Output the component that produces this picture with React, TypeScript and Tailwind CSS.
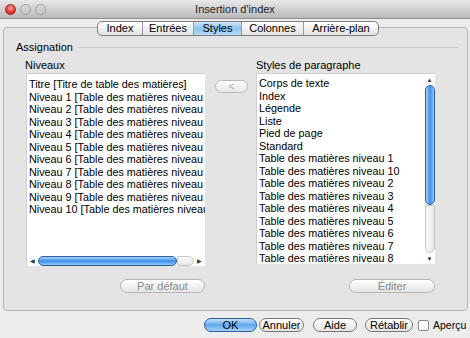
import React from 'react';

const niveaux = [
  'Titre [Titre de table des matières]',
  'Niveau 1 [Table des matières niveau 1]',
  'Niveau 2 [Table des matières niveau 2]',
  'Niveau 3 [Table des matières niveau 3]',
  'Niveau 4 [Table des matières niveau 4]',
  'Niveau 5 [Table des matières niveau 5]',
  'Niveau 6 [Table des matières niveau 6]',
  'Niveau 7 [Table des matières niveau 7]',
  'Niveau 8 [Table des matières niveau 8]',
  'Niveau 9 [Table des matières niveau 9]',
  'Niveau 10 [Table des matières niveau 10]',
];

const styles = [
  'Corps de texte',
  'Index',
  'Légende',
  'Liste',
  'Pied de page',
  'Standard',
  'Table des matières niveau 1',
  'Table des matières niveau 10',
  'Table des matières niveau 2',
  'Table des matières niveau 3',
  'Table des matières niveau 4',
  'Table des matières niveau 5',
  'Table des matières niveau 6',
  'Table des matières niveau 7',
  'Table des matières niveau 8',
  'Table des matières niveau 9',
];

const tabs = ['Index', 'Entrées', 'Styles', 'Colonnes', 'Arrière-plan'];

const Pill = ({ label, className, disabled }: { label: string; className: string; disabled?: boolean }) => (
  <div
    className={
      'flex items-center justify-center rounded-full border bg-gradient-to-b from-[#ffffff] to-[#e4e4e4] ' +
      (disabled ? 'border-[#b4b4b4] text-[#8a8a8a] ' : 'border-[#777] text-black ') +
      className
    }
  >
    {label}
  </div>
);

export default function App() {
  return (
    <div className="w-[470px] h-[338px] overflow-hidden bg-[#ececec] text-[10px] text-black font-['Liberation_Sans',Arial,sans-serif]">
      {/* title bar */}
      <div className="h-[19px] flex items-center border-b border-[#8f8f8f] bg-gradient-to-b from-[#e9e9e9] to-[#b9b9b9]">
        <div className="w-[60px] flex items-center gap-[4px] pl-[5px]">
          <span className="w-[11px] h-[11px] rounded-full border border-[#a22] bg-[radial-gradient(circle_at_50%_35%,#ffb0a8,#e0322a_60%,#b51a14)]" />
          <span className="w-[11px] h-[11px] rounded-full border border-[#a0a0a0] bg-gradient-to-b from-[#d8d8d8] to-[#c4c4c4]" />
          <span className="w-[11px] h-[11px] rounded-full border border-[#a0a0a0] bg-gradient-to-b from-[#d8d8d8] to-[#c4c4c4]" />
        </div>
        <div className="flex-1 text-center text-[11px] text-[#222] leading-none">Insertion d'index</div>
        <div className="w-[60px]" />
      </div>

      {/* tabs */}
      <div className="relative z-10 mt-[2px] pl-[97px] flex">
        <div className="flex h-[15px] rounded-[5px] border border-[#7d7d7d] overflow-hidden bg-gradient-to-b from-[#ffffff] to-[#e3e3e3] text-[11px]">
          {tabs.map((t, i) => (
            <div
              key={t}
              className={
                'flex items-center justify-center leading-none ' +
                (i > 0 ? 'border-l border-[#9a9a9a] ' : '') +
                (t === 'Styles' ? 'bg-gradient-to-b from-[#cfe6fa] via-[#8fc3ee] to-[#b6dafa] ' : '') +
                (t === 'Index' ? 'w-[44px]' : t === 'Entrées' ? 'w-[51px]' : t === 'Styles' ? 'w-[48px]' : t === 'Colonnes' ? 'w-[62px]' : 'w-[75px]')
              }
            >
              {t}
            </div>
          ))}
        </div>
      </div>

      {/* group box */}
      <div className="-mt-[9px] ml-[3px] w-[465px] h-[284px] rounded-[4px] border border-[#b5b5b5] bg-[#e4e4e4] flex flex-col">
        <div className="mt-[13px] pl-[12px] flex items-center gap-[5px]">
          <span className="text-[11px] leading-[12px]">Assignation</span>
          <span className="w-[380px] h-px bg-[#c8c8c8]" />
        </div>

        <div className="mt-[6px] flex pl-[21px] text-[11px] leading-[12px]">
          <span className="w-[231px]">Niveaux</span>
          <span>Styles de paragraphe</span>
        </div>

        <div className="mt-[2px] flex pl-[22px] text-[10.8px]">
          {/* left list */}
          <div className="flex flex-col items-end">
            <div className="w-[179px] h-[193px] bg-white border-l border-t border-[#cfcfcf] flex flex-col">
              <div className="flex-1 overflow-hidden pl-[2px] pt-[4px] leading-[12.5px] whitespace-nowrap">
                {niveaux.map((n) => (
                  <div key={n}>{n}</div>
                ))}
              </div>
              {/* horizontal scrollbar */}
              <div className="h-[11px] flex items-center bg-white">
                <div className="w-[11px] flex justify-center text-[6px] text-[#333] leading-none">◀</div>
                <div className="w-[140px] h-[10px] rounded-full border border-[#2c5f9e] bg-gradient-to-b from-[#a9d4ff] via-[#3d8ee6] to-[#8fc8ff]" />
                <div className="w-[17px] h-[10px] rounded-r-full border border-[#c8c8c8] bg-gradient-to-b from-[#fafafa] to-[#e8e8e8]" />
                <div className="w-[11px] flex justify-center text-[6px] text-[#333] leading-none">▶</div>
              </div>
            </div>
            <Pill label="Par défaut" disabled className="mt-[13px] w-[85px] h-[14px] text-[11px]" />
          </div>

          {/* arrow button */}
          <div className="ml-[10px] mt-[7px] w-[33px] h-[13px] rounded-full border border-[#b8b8b8] bg-gradient-to-b from-[#fdfdfd] to-[#e6e6e6] flex items-center justify-center text-[#b0b0b0] text-[11px] leading-none">
            &lt;
          </div>

          {/* right list */}
          <div className="ml-[8px] flex flex-col items-end">
            <div className="w-[179px] h-[191px] bg-white border-l border-t border-[#cfcfcf] flex">
              <div className="flex-1 overflow-hidden pl-[2px] pt-[3px] leading-[12.5px] whitespace-nowrap">
                {styles.map((s) => (
                  <div key={s}>{s}</div>
                ))}
              </div>
              {/* vertical scrollbar */}
              <div className="w-[11px] flex flex-col items-center bg-white">
                <div className="h-[11px] flex items-center text-[6px] text-[#333] leading-none">▲</div>
                <div className="w-[10px] h-[120px] rounded-full border border-[#2c5f9e] bg-gradient-to-r from-[#a9d4ff] via-[#3d8ee6] to-[#8fc8ff]" />
                <div className="w-[10px] flex-1 rounded-b-full border border-[#c8c8c8] bg-gradient-to-r from-[#fafafa] to-[#e8e8e8]" />
                <div className="h-[11px] flex items-center text-[6px] text-[#333] leading-none">▼</div>
              </div>
            </div>
            <Pill label="Éditer" disabled className="mt-[15px] w-[86px] h-[14px] text-[11px]" />
          </div>
        </div>
      </div>

      {/* bottom buttons */}
      <div className="mt-[7px] pl-[204px] flex items-center text-[11px]">
        <div className="w-[53px] h-[14px] rounded-full border border-[#2a5d9c] bg-gradient-to-b from-[#c7e2fb] via-[#5fa6ea] to-[#a7d3fb] flex items-center justify-center leading-none">
          OK
        </div>
        <Pill label="Annuler" className="ml-[2px] w-[45px] h-[14px] leading-none" />
        <Pill label="Aide" className="ml-[9px] w-[44px] h-[14px] leading-none" />
        <Pill label="Rétablir" className="ml-[8px] w-[48px] h-[14px] leading-none" />
        <span className="ml-[5px] w-[11px] h-[11px] rounded-[2px] border border-[#888] bg-white" />
        <span className="ml-[4px] text-[10.5px] leading-none">Aperçu</span>
      </div>
    </div>
  );
}
